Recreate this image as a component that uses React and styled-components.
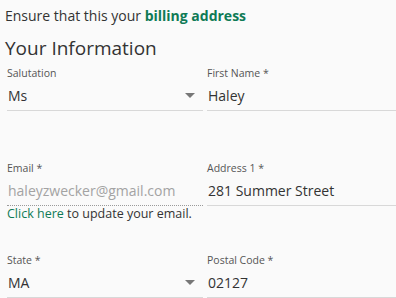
import React from 'react';
import styled, { createGlobalStyle } from 'styled-components';

const Global = createGlobalStyle`
  body {
    margin: 0;
    background: #fafafa;
    font-family: "Open Sans", "Liberation Sans", sans-serif;
    color: #333;
    overflow: hidden;
  }
`;

const Page = styled.div`
  box-sizing: border-box;
  width: 396px;
  padding: 6px 0 0 5px;
`;

const Notice = styled.div`
  font-size: 14px;
  line-height: 20px;
  color: #333;
`;

const Strong = styled.span`
  font-weight: 700;
  color: #0f7a56;
`;

const Heading = styled.h2`
  margin: 10px 0 0;
  font-size: 19px;
  line-height: 24px;
  font-weight: 400;
  color: #333;
`;

const Grid = styled.div`
  margin: 6px 0 0 2px;
  display: grid;
  grid-template-columns: 196px 1fr;
  grid-template-rows: 95px 92px auto;
  column-gap: 4px;
`;

const Field = styled.div`
  display: flex;
  flex-direction: column;
`;

const Label = styled.label`
  font-size: 10.5px;
  line-height: 14px;
  color: #555;
`;

const Value = styled.div`
  position: relative;
  padding: 6px 1px 4px;
  font-size: 14px;
  line-height: 20px;
  color: ${p => (p.disabled ? '#a3a3a3' : '#333')};
  border-bottom: 1px ${p => (p.disabled ? 'dotted #9a9a9a' : 'solid #d8d8d8')};
`;

const Arrow = styled.span`
  position: absolute;
  right: 8px;
  top: 13px;
  width: 0;
  height: 0;
  border-left: 5px solid transparent;
  border-right: 5px solid transparent;
  border-top: 5px solid #777;
`;

const Helper = styled.div`
  font-size: 12.5px;
  line-height: 16px;
  color: #333;
`;

const Link = styled.a`
  color: #0f7a56;
  text-decoration: none;
`;

function TextField({ label, value, select, disabled, children }) {
  return (
    <Field>
      <Label>{label}</Label>
      <Value disabled={disabled}>
        {value}
        {select && <Arrow />}
      </Value>
      {children}
    </Field>
  );
}

export default function App() {
  return (
    <Page>
      <Global />
      <Notice>
        Ensure that this your <Strong>billing address</Strong>
      </Notice>
      <Heading>Your Information</Heading>
      <Grid>
        <TextField label="Salutation" value="Ms" select />
        <TextField label="First Name *" value="Haley" />
        <TextField label="Email *" value="haleyzwecker@gmail.com" disabled>
          <Helper>
            <Link href="#">Click here</Link> to update your email.
          </Helper>
        </TextField>
        <TextField label="Address 1 *" value="281 Summer Street" />
        <TextField label="State *" value="MA" select />
        <TextField label="Postal Code *" value="02127" />
      </Grid>
    </Page>
  );
}
